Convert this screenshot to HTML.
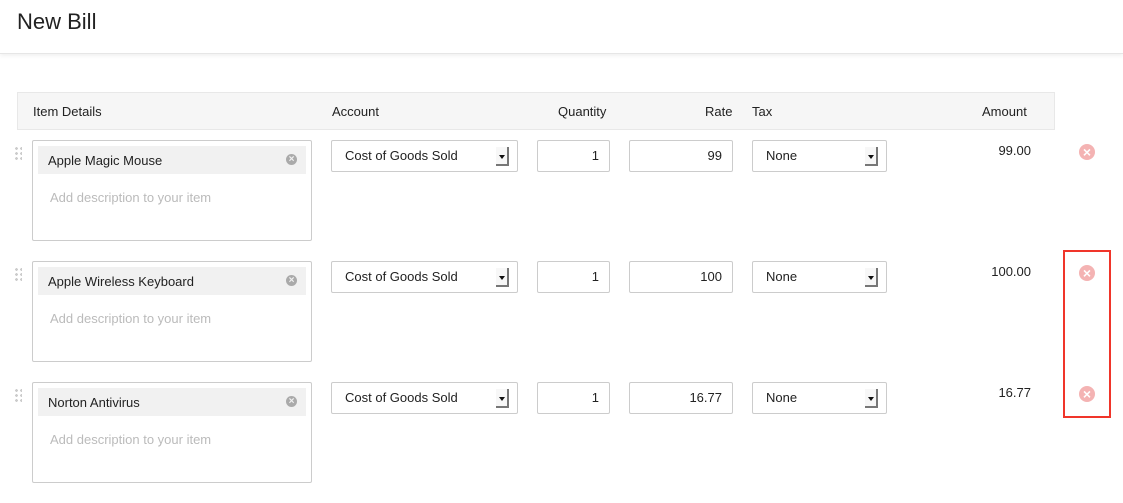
<!DOCTYPE html>
<html><head><style>
*{box-sizing:border-box;margin:0;padding:0}
body{width:1123px;height:503px;background:#fff;font-family:"Liberation Sans",sans-serif;color:#222;position:relative;overflow:hidden}
.hdr{position:absolute;left:0;top:0;width:1123px;height:54px;border-bottom:1px solid #e6e6e6;box-shadow:0 2px 4px rgba(0,0,0,.06)}
.hdr h1{position:absolute;left:17px;top:9px;font-size:22px;font-weight:normal;color:#222}
.th{position:absolute;left:17px;top:92px;width:1038px;height:38px;background:#f6f6f6;border:1px solid #e8e8e8;font-size:13px}
.th span{position:absolute;top:11px}
.a{position:absolute}
.box{border:1px solid #ccc;background:#fff;border-radius:2px}
.item{width:280px;height:101px}
.name{position:absolute;left:5px;top:5px;width:268px;height:28px;background:#f1f1f1;font-size:13px;padding:7px 10px}
.x{position:absolute;right:9px;top:8px;width:11px;height:11px;border-radius:50%;background:#aaa;color:#f1f1f1;font-size:10px;line-height:11px;text-align:center;font-weight:bold}
.desc{position:absolute;left:17px;top:49px;font-size:13px;color:#bbb}
.inp{height:32px;font-size:13px;padding:7px 10px}
.sel{padding:7px 13px}
.arr{position:absolute;right:8px;top:6px;width:13px;height:19px;border-right:2px solid #777;border-bottom:2px solid #777;background:#f7f7f7}
.arr:after{content:"";position:absolute;left:3px;top:8px;border-left:3px solid transparent;border-right:3px solid transparent;border-top:4px solid #111}
.r{text-align:right}
.amt{font-size:13px;width:80px;text-align:right}
.del{width:16px;height:16px;border-radius:50%;background:#f4b3b3;color:#fff;font-size:14px;line-height:16px;text-align:center;font-weight:bold}
.drag{width:8px;height:14px;background-image:radial-gradient(circle,#ccc 1.3px,transparent 1.5px);background-size:5px 5px}
</style></head><body>
<div class="hdr"><h1>New Bill</h1></div>
<div class="th">
<span style="left:15px">Item Details</span><span style="left:314px">Account</span>
<span style="left:540px">Quantity</span><span style="left:687px">Rate</span>
<span style="left:734px">Tax</span><span style="left:964px">Amount</span></div>

<div class="a drag" style="left:14px;top:146px"></div>
<div class="a box item" style="left:32px;top:140px"><div class="name">Apple Magic Mouse<div class="x">×</div></div><div class="desc">Add description to your item</div></div>
<div class="a box inp sel" style="left:331px;top:140px;width:187px">Cost of Goods Sold<div class="arr"></div></div>
<div class="a box inp r" style="left:537px;top:140px;width:73px">1</div>
<div class="a box inp r" style="left:629px;top:140px;width:104px">99</div>
<div class="a box inp sel" style="left:752px;top:140px;width:135px">None<div class="arr"></div></div>
<div class="a amt" style="left:951px;top:143px">99.00</div>
<div class="a del" style="left:1079px;top:144px">×</div>

<div class="a drag" style="left:14px;top:267px"></div>
<div class="a box item" style="left:32px;top:261px"><div class="name">Apple Wireless Keyboard<div class="x">×</div></div><div class="desc">Add description to your item</div></div>
<div class="a box inp sel" style="left:331px;top:261px;width:187px">Cost of Goods Sold<div class="arr"></div></div>
<div class="a box inp r" style="left:537px;top:261px;width:73px">1</div>
<div class="a box inp r" style="left:629px;top:261px;width:104px">100</div>
<div class="a box inp sel" style="left:752px;top:261px;width:135px">None<div class="arr"></div></div>
<div class="a amt" style="left:951px;top:264px">100.00</div>
<div class="a del" style="left:1079px;top:265px">×</div>

<div class="a drag" style="left:14px;top:388px"></div>
<div class="a box item" style="left:32px;top:382px"><div class="name">Norton Antivirus<div class="x">×</div></div><div class="desc">Add description to your item</div></div>
<div class="a box inp sel" style="left:331px;top:382px;width:187px">Cost of Goods Sold<div class="arr"></div></div>
<div class="a box inp r" style="left:537px;top:382px;width:73px">1</div>
<div class="a box inp r" style="left:629px;top:382px;width:104px">16.77</div>
<div class="a box inp sel" style="left:752px;top:382px;width:135px">None<div class="arr"></div></div>
<div class="a amt" style="left:951px;top:385px">16.77</div>
<div class="a del" style="left:1079px;top:386px">×</div>

<div class="a" style="left:1063px;top:250px;width:48px;height:168px;border:2px solid #f0352a"></div>
</body></html>
